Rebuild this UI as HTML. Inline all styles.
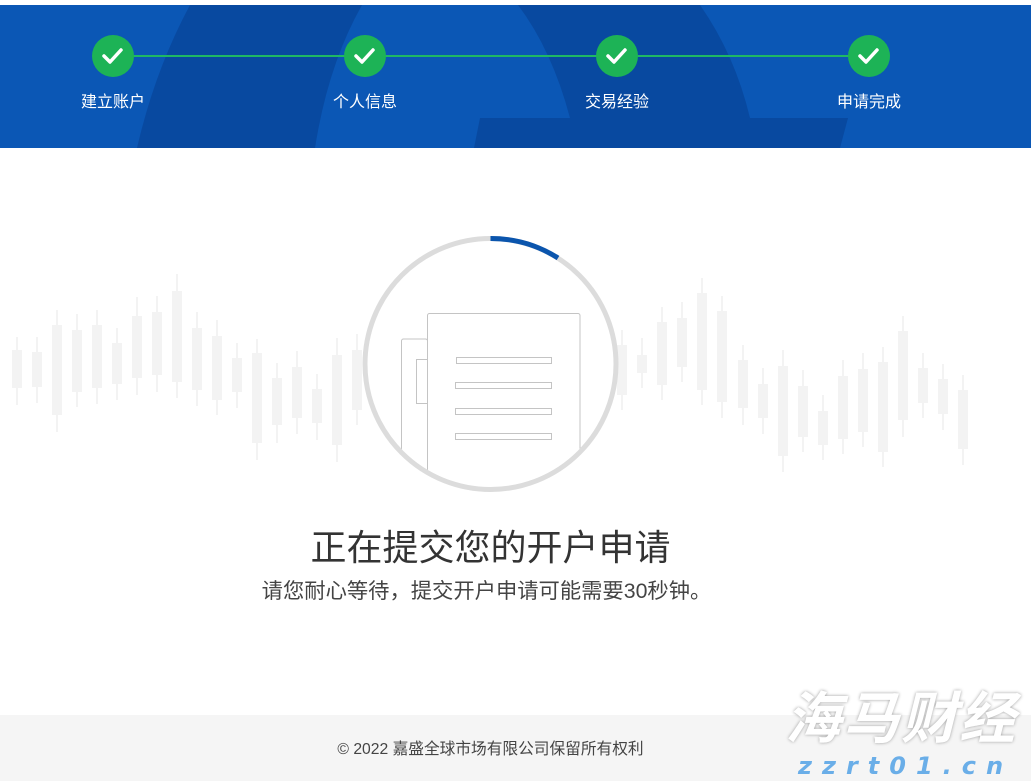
<!DOCTYPE html>
<html><head><meta charset="utf-8"><style>
html,body{margin:0;padding:0;background:#fff;width:1031px;height:781px;overflow:hidden;font-family:"Liberation Sans","Noto Sans CJK SC",sans-serif}
.abs{position:absolute}
</style></head><body>
<svg class="abs" style="left:0;top:0" width="1031" height="781" viewBox="0 0 1031 781">
<defs><clipPath id="cc"><circle cx="490.5" cy="364" r="123"/></clipPath></defs>
<rect x="0" y="5" width="1031" height="143" fill="#0b57b5"/>
<path d="M190,5 Q155,70 137,148 L315,148 Q328,65 362,5 Z" fill="#0849a0"/>
<path d="M518,5 Q552,50 570,118 L480,118 L474,148 L840,148 L848,118 L750,118 Q735,55 700,5 Z" fill="#0849a0"/>
<line x1="113" y1="56" x2="869" y2="56" stroke="#1fb864" stroke-width="2"/>
<g fill="#1db356">
<circle cx="113" cy="56" r="21"/><circle cx="365" cy="56" r="21"/><circle cx="617" cy="56" r="21"/><circle cx="869" cy="56" r="21"/>
</g>
<g fill="none" stroke="#fff" stroke-width="3.5" stroke-linecap="round" stroke-linejoin="round">
<path d="M104,56 l6,6 l11,-12"/><path d="M356,56 l6,6 l11,-12"/><path d="M608,56 l6,6 l11,-12"/><path d="M860,56 l6,6 l11,-12"/>
</g>
<g fill="#fff" font-size="16" text-anchor="middle" font-family="Liberation Sans,Noto Sans CJK SC,sans-serif">
<text x="113" y="107">建立账户</text><text x="365" y="107">个人信息</text><text x="617" y="107">交易经验</text><text x="869" y="107">申请完成</text>
</g>
<g fill="#f3f3f3">
<rect x="12" y="350" width="10" height="38"/><rect x="16" y="337" width="2" height="68"/>
<rect x="32" y="352" width="10" height="35"/><rect x="36" y="337" width="2" height="66"/>
<rect x="52" y="325" width="10" height="90"/><rect x="56" y="310" width="2" height="122"/>
<rect x="72" y="330" width="10" height="62"/><rect x="76" y="314" width="2" height="93"/>
<rect x="92" y="325" width="10" height="63"/><rect x="96" y="310" width="2" height="94"/>
<rect x="112" y="343" width="10" height="41"/><rect x="116" y="328" width="2" height="72"/>
<rect x="132" y="316" width="10" height="62"/><rect x="136" y="297" width="2" height="98"/>
<rect x="152" y="312" width="10" height="63"/><rect x="156" y="296" width="2" height="96"/>
<rect x="172" y="291" width="10" height="91"/><rect x="176" y="274" width="2" height="124"/>
<rect x="192" y="328" width="10" height="62"/><rect x="196" y="312" width="2" height="94"/>
<rect x="212" y="336" width="10" height="64"/><rect x="216" y="320" width="2" height="95"/>
<rect x="232" y="358" width="10" height="34"/><rect x="236" y="343" width="2" height="65"/>
<rect x="252" y="353" width="10" height="90"/><rect x="256" y="339" width="2" height="121"/>
<rect x="272" y="378" width="10" height="47"/><rect x="276" y="363" width="2" height="80"/>
<rect x="292" y="367" width="10" height="51"/><rect x="296" y="351" width="2" height="83"/>
<rect x="312" y="389" width="10" height="34"/><rect x="316" y="374" width="2" height="66"/>
<rect x="332" y="355" width="10" height="90"/><rect x="336" y="338" width="2" height="124"/>
<rect x="352" y="350" width="10" height="60"/><rect x="356" y="334" width="2" height="91"/>
<rect x="617" y="345" width="10" height="50"/><rect x="621" y="330" width="2" height="80"/>
<rect x="637" y="355" width="10" height="18"/><rect x="641" y="338" width="2" height="50"/>
<rect x="657" y="322" width="10" height="63"/><rect x="661" y="307" width="2" height="93"/>
<rect x="677" y="318" width="10" height="49"/><rect x="681" y="302" width="2" height="80"/>
<rect x="697" y="293" width="10" height="97"/><rect x="701" y="278" width="2" height="127"/>
<rect x="717" y="311" width="10" height="91"/><rect x="721" y="296" width="2" height="122"/>
<rect x="738" y="360" width="10" height="48"/><rect x="742" y="345" width="2" height="80"/>
<rect x="758" y="384" width="10" height="34"/><rect x="762" y="368" width="2" height="66"/>
<rect x="778" y="366" width="10" height="90"/><rect x="782" y="350" width="2" height="122"/>
<rect x="798" y="386" width="10" height="51"/><rect x="802" y="370" width="2" height="82"/>
<rect x="818" y="411" width="10" height="34"/><rect x="822" y="395" width="2" height="65"/>
<rect x="838" y="376" width="10" height="63"/><rect x="842" y="360" width="2" height="94"/>
<rect x="858" y="369" width="10" height="63"/><rect x="862" y="353" width="2" height="94"/>
<rect x="878" y="362" width="10" height="90"/><rect x="882" y="347" width="2" height="120"/>
<rect x="898" y="331" width="10" height="89"/><rect x="902" y="316" width="2" height="121"/>
<rect x="918" y="368" width="10" height="35"/><rect x="922" y="353" width="2" height="65"/>
<rect x="938" y="379" width="10" height="35"/><rect x="942" y="364" width="2" height="66"/>
<rect x="958" y="390" width="10" height="59"/><rect x="962" y="375" width="2" height="90"/>
</g>
<circle cx="490.5" cy="364" r="125.5" fill="#fff" stroke="#dcdcdc" stroke-width="5"/>
<path d="M490.5,238.5 A125.5,125.5 0 0 1 558,258" fill="none" stroke="#0b55ad" stroke-width="5"/>
<g clip-path="url(#cc)" fill="#fff" stroke="#c4c4c4" stroke-width="1">
<path d="M427.5,480 V341 a2,2 0 0 0 -2,-2 H403.5 a2,2 0 0 0 -2,2 V480"/>
<rect x="416.5" y="359.5" width="11" height="44"/>
<path d="M427.5,480 V315.5 a2,2 0 0 1 2,-2 H578 a2,2 0 0 1 2,2 V480"/>
<rect x="456.5" y="357.5" width="95" height="6"/>
<rect x="455.5" y="382.5" width="96" height="6"/>
<rect x="455.5" y="408.5" width="96" height="6"/>
<rect x="455.5" y="433.5" width="96" height="6"/>
</g>
<rect x="0" y="715" width="1031" height="66" fill="#f5f5f5"/>
</svg>
<div class="abs" style="left:0;width:981px;top:525px;text-align:center;font-size:36px;color:#333;line-height:46px">正在提交您的开户申请</div>
<div class="abs" style="left:0;width:973px;top:576px;text-align:center;font-size:21.3px;color:#444;line-height:30px">请您耐心等待，提交开户申请可能需要30秒钟。</div>
<div class="abs" style="left:0;width:981px;top:740px;text-align:center;font-size:15.7px;color:#444;line-height:20px">© 2022 嘉盛全球市场有限公司保留所有权利</div>
<div class="abs" style="left:785px;top:680px;font-size:56px;font-style:italic;font-weight:bold;color:#fff;letter-spacing:2px;text-shadow:0 0 3px #999;line-height:70px;font-family:'Noto Sans CJK SC',sans-serif">海马财经</div>
<div class="abs" style="left:798px;top:752px;font-size:24px;font-style:italic;font-weight:bold;color:#6aaee8;letter-spacing:10px;line-height:28px;font-family:'DejaVu Sans',sans-serif">zzrt01.cn</div>
</body></html>
